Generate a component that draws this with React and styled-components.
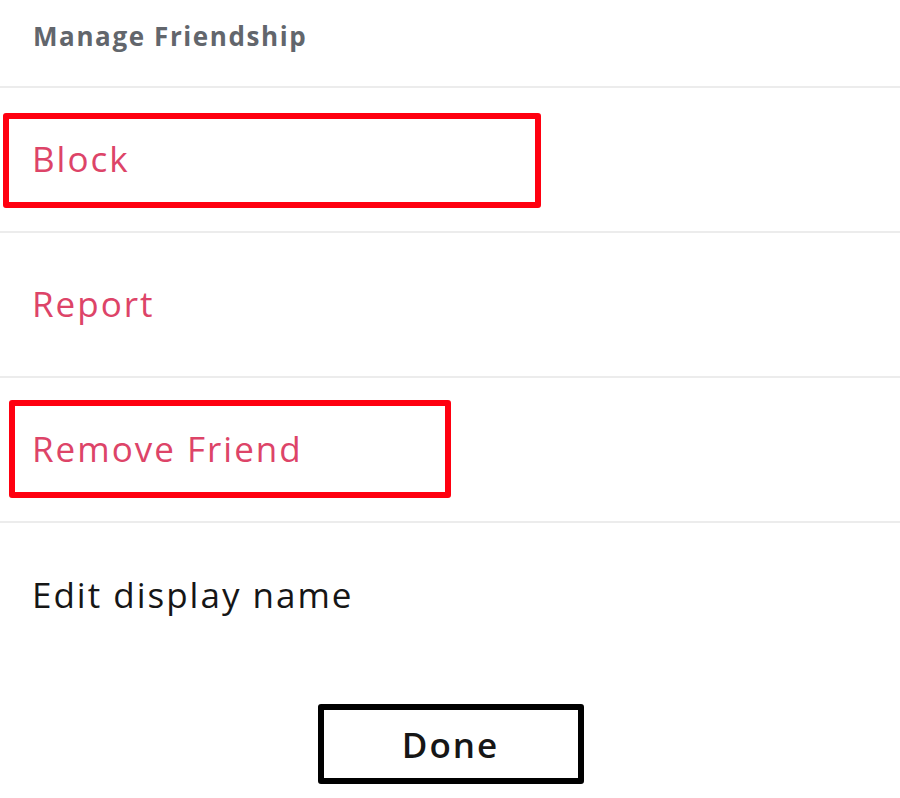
import styled, { createGlobalStyle } from 'styled-components'

const GlobalStyle = createGlobalStyle`
    html, body {
        margin: 0;
        padding: 0;
        background: #ffffff;
    }
    body {
        font-family: "Open Sans", "Noto Sans", sans-serif;
    }
`

const rows = [
    { label: 'Block', danger: true, marked: 'block' },
    { label: 'Report', danger: true },
    { label: 'Remove Friend', danger: true, marked: 'remove' },
    { label: 'Edit display name', danger: false, last: true },
]

const App = () => {
    return (
        <>
            <GlobalStyle />
            <Sheet>
                <Header>Manage Friendship</Header>
                {rows.map((row) => (
                    <Row key={row.label} $last={row.last}>
                        <Label $danger={row.danger}>{row.label}</Label>
                        {row.marked && <Highlight $kind={row.marked} />}
                    </Row>
                ))}
                <Footer>
                    <DoneButton>Done</DoneButton>
                </Footer>
            </Sheet>
        </>
    )
}

const Sheet = styled.div`
    width: 900px;
    height: 798px;
    background: #fff;
    display: flex;
    flex-direction: column;
    overflow: hidden;
`
const Header = styled.div`
    height: 88px;
    box-sizing: border-box;
    padding: 18px 0 0 33px;
    font-size: 26px;
    font-weight: 700;
    letter-spacing: 1.6px;
    color: #62666c;
    border-bottom: 2px solid #ececec;
`
const Row = styled.div`
    position: relative;
    height: 145px;
    box-sizing: border-box;
    display: flex;
    align-items: center;
    padding-left: 32px;
    border-bottom: ${(p) => (p.$last ? 'none' : '2px solid #ececec')};
`
const Label = styled.span`
    font-size: 35px;
    font-weight: 400;
    letter-spacing: 2px;
    color: ${(p) => (p.$danger ? '#dd4468' : '#161616')};
    margin-top: -2px;
`
const Highlight = styled.div`
    position: absolute;
    box-sizing: border-box;
    border: 6px solid #ff0010;
    border-radius: 3px;
    pointer-events: none;
    ${(p) =>
        p.$kind === 'block'
            ? `left: 3px; top: 25px; width: 538px; height: 95px;`
            : `left: 9px; top: 22px; width: 442px; height: 98px;`}
`
const Footer = styled.div`
    flex: 1;
    display: flex;
    justify-content: center;
    align-items: flex-start;
    padding-top: 36px;
`
const DoneButton = styled.button`
    width: 266px;
    height: 80px;
    margin-left: 1px;
    box-sizing: border-box;
    border: 6px solid #000;
    border-radius: 3px;
    background: #fff;
    font-family: "Open Sans", "Noto Sans", sans-serif;
    font-size: 35px;
    font-weight: 600;
    letter-spacing: 2px;
    color: #161616;
    cursor: pointer;
`

export default App
